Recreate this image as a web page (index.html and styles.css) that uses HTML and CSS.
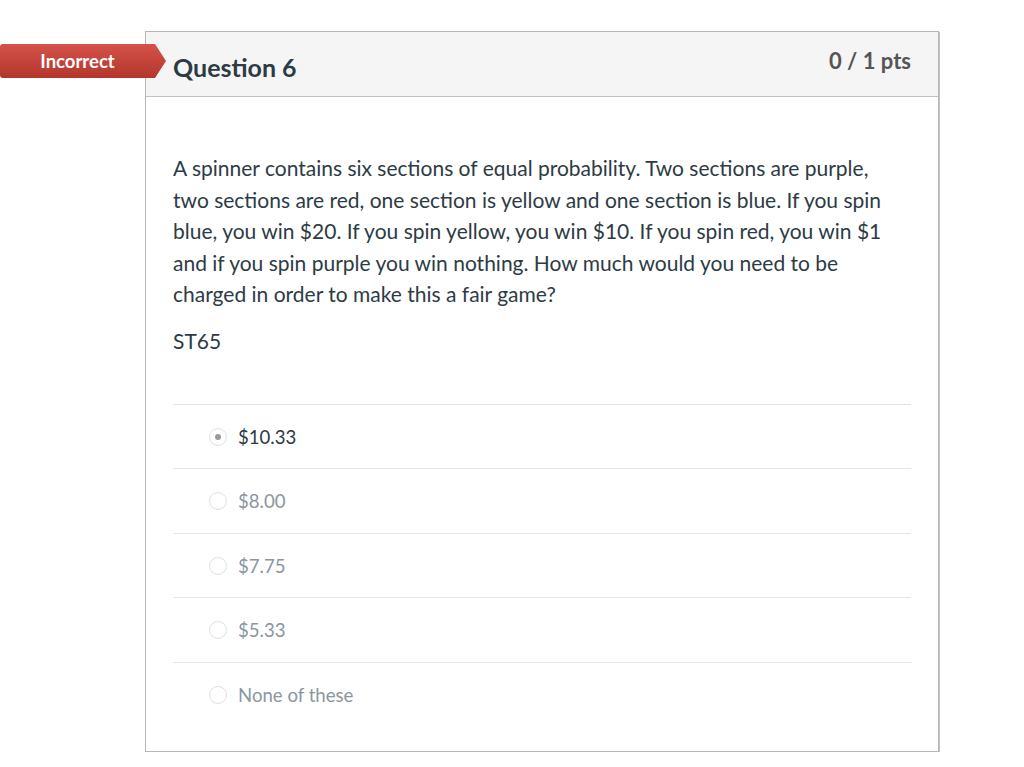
FILE: index.html
```html
<!DOCTYPE html>
<html>
<head>
<meta charset="utf-8">
<link rel="stylesheet" href="styles.css">
</head>
<body>
<div class="page">
  <div class="badge"><span>Incorrect</span></div>
  <div class="card">
    <div class="header">
      <div class="title">Question 6</div>
      <div class="pts">0 / 1 pts</div>
    </div>
    <div class="body">
      <p class="text">A spinner contains six sections of equal probability. Two sections are purple, two sections are red, one section is yellow and one section is blue. If you spin blue, you win $20. If you spin yellow, you win $10. If you spin red, you win $1 and if you spin purple you win nothing. How much would you need to be charged in order to make this a fair game?</p>
      <p class="code">ST65</p>
      <div class="answers">
        <div class="answer selected"><span class="radio"><span class="dot"></span></span><span class="label">$10.33</span></div>
        <div class="answer"><span class="radio"></span><span class="label">$8.00</span></div>
        <div class="answer"><span class="radio"></span><span class="label">$7.75</span></div>
        <div class="answer"><span class="radio"></span><span class="label">$5.33</span></div>
        <div class="answer"><span class="radio"></span><span class="label">None of these</span></div>
      </div>
    </div>
  </div>
</div>
</body>
</html>
```
FILE: styles.css
```css
html, body { margin: 0; padding: 0; background: #fff; }
body { font-family: Lato, "Noto Sans", sans-serif; color: #2d3b45; }
.page { position: relative; padding: 31px 0 0 145px; }
.card {
  width: 794px;
  height: 721px;
  border: 1px solid #b5b5b5;
  box-shadow: 1px 1px 0 #c4c4c4;
  box-sizing: border-box;
}
.header {
  height: 65px;
  background: #f5f5f5;
  border-bottom: 1px solid #c2c2c2;
  display: flex;
  justify-content: space-between;
  padding: 0 27px;
  box-sizing: border-box;
}
.title { font-weight: 700; font-size: 25px; color: #2d3b45; padding-top: 20px; }
.pts { font-weight: 700; font-size: 22px; color: #555; padding-top: 15px; }
.badge {
  position: absolute;
  left: 0; top: 44px;
  width: 166px; height: 34px;
  background: linear-gradient(#d5524a, #b3362c);
  clip-path: polygon(0 0, 155px 0, 166px 50%, 155px 100%, 0 100%);
  border-radius: 3px 0 0 3px;
  display: flex; align-items: center;
}
.badge span { width: 155px; text-align: center; color: #fff; font-weight: 700; font-size: 18.5px; margin-top: -1px; }
.body { padding: 55px 27px 0 27px; }
.text { margin: 0; font-size: 21px; line-height: 31.6px; color: #2d3b45; max-width: 720px; }
.code { margin: 15px 0 0 0; font-size: 21px; line-height: 31px; }
.answers { margin-top: 48px; border-top: 1px solid #e2e2e2; }
.answer {
  height: 64.5px;
  box-sizing: border-box;
  border-bottom: 1px solid #e6e6e6;
  display: flex; align-items: center;
  padding-left: 36px;
  color: #8b969e;
  font-size: 18.6px;
}
.answer:last-child { border-bottom: none; }
.answer.selected { color: #2d3b45; }
.radio {
  width: 18px; height: 18px;
  border: 1px solid #e0e0e0;
  border-radius: 50%;
  box-sizing: border-box;
  display: flex; align-items: center; justify-content: center;
  margin-right: 11px;
}
.dot { width: 6px; height: 6px; border-radius: 50%; background: #9a9a9a; }
```
